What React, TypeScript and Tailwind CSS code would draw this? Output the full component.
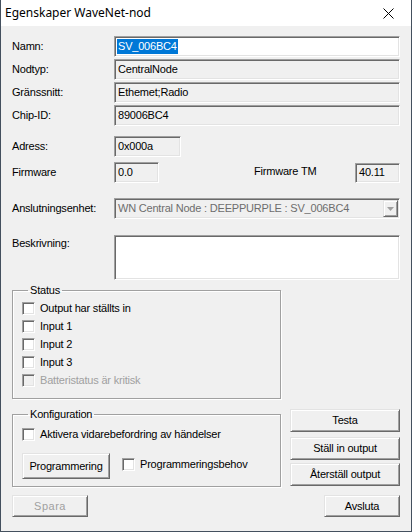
import React from "react"

const sunken =
    "border border-t-[#a0a0a0] border-l-[#a0a0a0] border-b-white border-r-white shadow-[inset_1px_1px_0_#696969,inset_-1px_-1px_0_#e3e3e3]"
const raised =
    "border border-t-[#e3e3e3] border-l-[#e3e3e3] border-b-[#696969] border-r-[#696969] shadow-[inset_1px_1px_0_#ffffff,inset_-1px_-1px_0_#a0a0a0] bg-[#f0f0f0]"

function Field({ label, value, className = "h-[21px] flex-1" }: { label: string; value: string; className?: string }) {
    return (
        <div className="flex items-center">
            <span className="w-[102px]">{label}</span>
            <div className={`${sunken} ${className} bg-[#f0f0f0] flex items-center pl-[3px] text-black`}>{value}</div>
        </div>
    )
}

function Check({ label, disabled = false }: { label: string; disabled?: boolean }) {
    return (
        <div className="flex items-center h-[18px]">
            <span className={`w-[13px] h-[13px] border border-t-[#a0a0a0] border-l-[#a0a0a0] border-b-white border-r-white shadow-[inset_1px_1px_0_#696969,inset_-1px_-1px_0_#e3e3e3] ${disabled ? "bg-[#f0f0f0]" : "bg-white"}`} />
            <span className={`ml-[5px] ${disabled ? "text-[#a0a0a0]" : "text-black"}`}>{label}</span>
        </div>
    )
}

function Button({ label, className = "", disabled = false }: { label: string; className?: string; disabled?: boolean }) {
    return (
        <div className={`${raised} ${className} flex items-center justify-center ${disabled ? "text-[#a0a0a0] tracking-[0.5px]" : "text-black"}`}>
            {label}
        </div>
    )
}

export default function App() {
    return (
        <div className="w-[412px] h-[532px] border border-[#44505e] border-t-0 bg-[#f0f0f0] flex flex-col text-[11px] tracking-[-0.2px] text-black font-['Liberation_Sans',Arial,sans-serif] leading-none">
            {/* title bar */}
            <div className="h-[26px] bg-white flex items-center justify-between pl-[4px] pr-[17px] shrink-0">
                <span className="text-[12px] tracking-normal font-['Noto_Sans',sans-serif]">Egenskaper WaveNet-nod</span>
                <svg width="11" height="11" viewBox="0 0 11 11">
                    <path d="M0.5 0.5 L10.5 10.5 M10.5 0.5 L0.5 10.5" stroke="#000" strokeWidth="1" />
                </svg>
            </div>

            <div className="flex flex-col px-[11px] pt-[10px]">
                <div className="flex items-center">
                    <span className="w-[102px]">Namn:</span>
                    <div className={`${sunken} h-[21px] flex-1 bg-white flex items-center pl-[2px]`}>
                        <span className="bg-[#0078d7] text-white px-[1px] h-[15px] flex items-center">SV_006BC4</span>
                    </div>
                </div>
                <div className="flex flex-col gap-[2px] mt-[2px]">
                    <Field label="Nodtyp:" value="CentralNode" />
                    <Field label="Gränssnitt:" value="Ethemet;Radio" />
                    <Field label="Chip-ID:" value="89006BC4" />
                </div>

                <div className="mt-[10px]">
                    <Field label="Adress:" value="0x000a" className="h-[21px] w-[67px]" />
                </div>
                <div className="flex items-center mt-[5px]">
                    <span className="w-[102px]">Firmware</span>
                    <div className={`${sunken} h-[21px] w-[45px] bg-[#f0f0f0] flex items-center pl-[3px]`}>0.0</div>
                    <span className="ml-[95px] -mt-[2px]">Firmware TM</span>
                    <div className={`${sunken} h-[20px] w-[45px] bg-[#f0f0f0] flex items-center pl-[3px] ml-auto`}>40.11</div>
                </div>

                <div className="flex items-center mt-[15px]">
                    <span className="w-[102px]">Anslutningsenhet:</span>
                    <div className={`${sunken} h-[21px] flex-1 bg-[#f0f0f0] flex items-center pl-[3px] pr-[1px] text-[#6d6d6d]`}>
                        <span className="flex-1">WN Central Node : DEEPPURPLE : SV_006BC4</span>
                        <div className={`${raised} w-[15px] h-[17px] flex items-center justify-center`}>
                            <svg width="7" height="4" viewBox="0 0 7 4">
                                <path d="M0 0 H7 L3.5 4 Z" fill="#a0a0a0" />
                            </svg>
                        </div>
                    </div>
                </div>

                <div className="flex items-start mt-[16px]">
                    <span className="w-[102px] pt-[3px]">Beskrivning:</span>
                    <div className={`${sunken} h-[45px] flex-1 bg-white`} />
                </div>

                <fieldset className="mt-[5px] w-[269px] border border-[#a0a0a0] shadow-[inset_1px_1px_0_#ffffff,1px_1px_0_#ffffff] pl-[9px] pb-[9px]">
                    <legend className="ml-[6px] px-[2px]">Status</legend>
                    <div className="flex flex-col mt-[3px]">
                        <Check label="Output har ställts in" />
                        <Check label="Input 1" />
                        <Check label="Input 2" />
                        <Check label="Input 3" />
                        <Check label="Batteristatus är kritisk" disabled />
                    </div>
                </fieldset>

                <div className="flex items-start mt-[10px]">
                    <fieldset className="w-[269px] h-[78px] border border-[#a0a0a0] shadow-[inset_1px_1px_0_#ffffff,1px_1px_0_#ffffff] pl-[9px]">
                        <legend className="ml-[6px] px-[2px]">Konfiguration</legend>
                        <div className="mt-[5px]">
                            <Check label="Aktivera vidarebefordring av händelser" />
                        </div>
                        <div className="flex items-center mt-[10px]">
                            <Button label="Programmering" className="w-[88px] h-[26px]" />
                            <div className="ml-[12px] -mt-[3px]">
                                <Check label="Programmeringsbehov" />
                            </div>
                        </div>
                    </fieldset>
                    <div className="flex flex-col ml-auto w-[110px]">
                        <Button label="Testa" className="h-[23px]" />
                        <Button label="Ställ in output" className="h-[23px] mt-[5px]" />
                        <Button label="Återställ output" className="h-[23px] mt-[3px]" />
                    </div>
                </div>

                <div className="flex justify-between mt-[8px]">
                    <Button label="Spara" className="w-[76px] h-[22px]" disabled />
                    <Button label="Avsluta" className="w-[76px] h-[22px]" />
                </div>
            </div>
        </div>
    )
}
